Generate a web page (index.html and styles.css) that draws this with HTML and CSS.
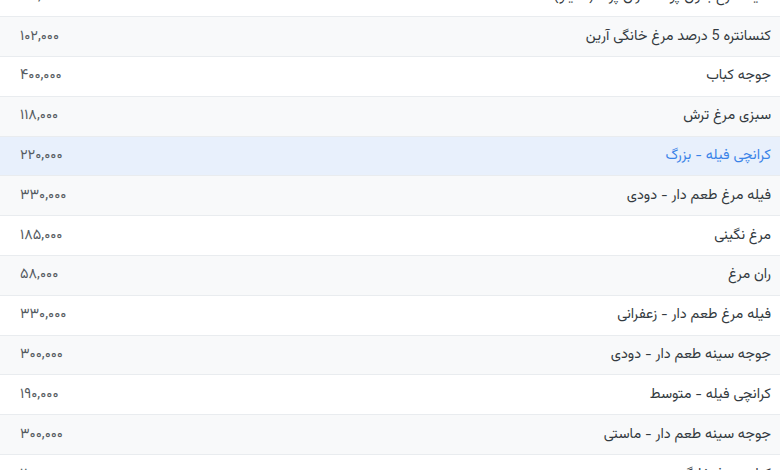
FILE: index.html
```html
<!DOCTYPE html>
<html lang="fa" dir="rtl">
<head>
<meta charset="utf-8">
<link rel="stylesheet" href="styles.css">
</head>
<body>
<div class="wrap">
<table class="prices">
<tbody>
<tr><td class="name">سینه مرغ بدون پوست ران پرند (۱ کیلو)</td><td class="price">۱۲۰,۰۰۰</td></tr>
<tr class="alt"><td class="name">کنسانتره 5 درصد مرغ خانگی آرین</td><td class="price">۱۰۲,۰۰۰</td></tr>
<tr><td class="name">جوجه کباب</td><td class="price">۴۰۰,۰۰۰</td></tr>
<tr class="alt"><td class="name">سبزی مرغ ترش</td><td class="price">۱۱۸,۰۰۰</td></tr>
<tr class="active"><td class="name"><a href="#">کرانچی فیله - بزرگ</a></td><td class="price">۲۲۰,۰۰۰</td></tr>
<tr class="alt"><td class="name">فیله مرغ طعم دار - دودی</td><td class="price">۳۳۰,۰۰۰</td></tr>
<tr><td class="name">مرغ نگینی</td><td class="price">۱۸۵,۰۰۰</td></tr>
<tr class="alt"><td class="name">ران مرغ</td><td class="price">۵۸,۰۰۰</td></tr>
<tr><td class="name">فیله مرغ طعم دار - زعفرانی</td><td class="price">۳۳۰,۰۰۰</td></tr>
<tr class="alt"><td class="name">جوجه سینه طعم دار - دودی</td><td class="price">۳۰۰,۰۰۰</td></tr>
<tr><td class="name">کرانچی فیله - متوسط</td><td class="price">۱۹۰,۰۰۰</td></tr>
<tr class="alt"><td class="name">جوجه سینه طعم دار - ماستی</td><td class="price">۳۰۰,۰۰۰</td></tr>
<tr><td class="name">کتلت مرغ خانگی</td><td class="price">۱۱۰,۰۰۰</td></tr>
</tbody>
</table>
</div>
</body>
</html>
```

FILE: styles.css
```css
html, body {
  margin: 0;
  padding: 0;
  background: #ffffff;
}
body {
  font-family: "Vazirmatn", "Noto Sans Arabic", "DejaVu Sans", sans-serif;
  color: #333a40;
  overflow: hidden;
}
.wrap {
  margin-top: -23px;
}
.prices {
  width: 100%;
  border-collapse: collapse;
}
.prices tr {
  height: 39.8px;
}
.prices td {
  padding: 0 9px 0 20px;
  border-top: 1px solid #e9ecef;
  line-height: 22px;
  vertical-align: middle;
}
.prices tr:first-child td {
  border-top: none;
}
.prices .name {
  text-align: right;
  font-size: 14.4px;
  white-space: nowrap;
}
.prices .price {
  text-align: left;
  font-size: 14.5px;
  color: #555b61;
  width: 120px;
}
.prices tr.alt td {
  background: #f8f9fa;
}
.prices tr.active td {
  background: #e8f0fc;
}
.prices a {
  color: #3a83e8;
  text-decoration: none;
}
```
